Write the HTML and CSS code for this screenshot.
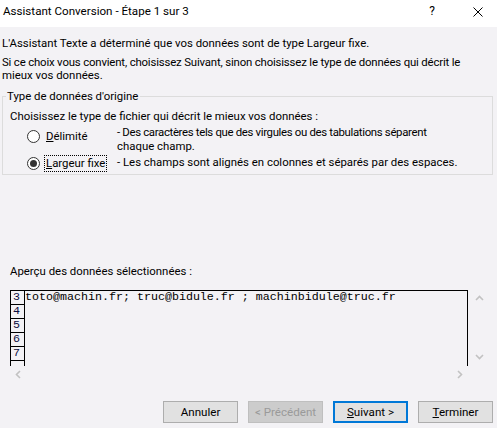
FILE: index.html
```html
<!DOCTYPE html>
<html lang="fr">
<head>
<meta charset="utf-8">
<title>Assistant Conversion</title>
<link rel="stylesheet" href="styles.css">
</head>
<body>
<div class="titlebar">
  <span class="title">Assistant Conversion - Étape 1 sur 3</span>
  <span class="help">?</span>
  <span class="close"><svg width="10" height="10" viewBox="0 0 10 10"><path d="M0.5 0.5 L9.5 9.5 M9.5 0.5 L0.5 9.5" stroke="#000" stroke-width="1" fill="none"/></svg></span>
</div>
<div class="dialog">
  <p class="p1">L'Assistant Texte a déterminé que vos données sont de type Largeur fixe.</p>
  <p class="p2">Si ce choix vous convient, choisissez Suivant, sinon choisissez le type de données qui décrit le</p>
  <p class="p3">mieux vos données.</p>
  <fieldset class="group">
    <legend>Type de données d'origine</legend>
    <div class="choose">Choisissez le type de fichier qui décrit le mieux vos données :</div>
    <div class="opts">
      <div class="opt opt1"><span class="radio"></span><span class="lbl"><u>D</u>élimité</span></div>
      <div class="desc"><span class="tight">- Des caractères tels que des virgules ou des tabulations séparent</span><br>chaque champ.</div>
      <div class="opt opt2"><span class="radio checked"></span><span class="lbl focus"><u>L</u>argeur fixe</span></div>
      <div class="desc">- Les champs sont alignés en colonnes et séparés par des espaces.</div>
    </div>
  </fieldset>
  <div class="preview-label">Aperçu des données sélectionnées :</div>
  <div class="preview-wrap">
    <div class="preview">
      <div class="nums">
        <div class="num">3</div>
        <div class="num">4</div>
        <div class="num">5</div>
        <div class="num">6</div>
        <div class="num">7</div>
        <div class="num"></div>
      </div>
      <div class="data">
        <div class="line">toto@machin.fr; truc@bidule.fr ; machinbidule@truc.fr</div>
      </div>
    </div>
    <div class="vscroll">
      <svg class="chev" width="9" height="6" viewBox="0 0 9 6"><path d="M1 5 L4.5 1.5 L8 5" stroke="#c2c2c2" stroke-width="1.6" fill="none"/></svg>
      <svg class="chev" width="9" height="6" viewBox="0 0 9 6"><path d="M1 1 L4.5 4.5 L8 1" stroke="#c2c2c2" stroke-width="1.6" fill="none"/></svg>
    </div>
  </div>
  <div class="hscroll">
    <svg class="chev" width="6" height="9" viewBox="0 0 6 9"><path d="M5 1 L1.5 4.5 L5 8" stroke="#c2c2c2" stroke-width="1.6" fill="none"/></svg>
    <svg class="chev" width="6" height="9" viewBox="0 0 6 9"><path d="M1 1 L4.5 4.5 L1 8" stroke="#c2c2c2" stroke-width="1.6" fill="none"/></svg>
  </div>
  <div class="buttons">
    <button class="btn">Annuler</button>
    <button class="btn disabled">&lt; Précédent</button>
    <button class="btn default"><u>S</u>uivant &gt;</button>
    <button class="btn"><u>T</u>erminer</button>
  </div>
</div>
</body>
</html>
```
FILE: styles.css
```css
* { box-sizing: border-box; }
html, body { margin: 0; padding: 0; }
body {
  width: 497px;
  height: 428px;
  overflow: hidden;
  background: #f3f2f5;
  font-family: Roboto, "Noto Sans", sans-serif;
  font-size: 11.4px;
  color: #000;
}
.titlebar {
  height: 27px;
  background: #fff;
  display: flex;
  align-items: flex-start;
  padding-top: 4px;
}
.title {
  padding-left: 3px;
  flex: 1;
  font-size: 11.6px;
  line-height: 15px;
}
.help {
  width: 54px;
  text-align: center;
  font-size: 12px;
  line-height: 15px;
}
.close {
  width: 38px;
  height: 15px;
  display: flex;
  justify-content: center;
  align-items: center;
}
.dialog p { margin: 0; padding-left: 2px; line-height: 13px; white-space: nowrap; }
.dialog .p1 { margin-top: 10px; }
.dialog .p2 { margin-top: 6px; letter-spacing: -0.17px; }
.group {
  margin: 8px 4px 0 2px;
  padding: 0 0 4px 0;
  border: 1px solid #dcdcdc;
  min-width: 0;
}
.group legend {
  margin-left: 3px;
  padding: 0 2px 0 1px;
  line-height: 13px;
}
.choose {
  margin-top: 7px;
  padding-left: 7px;
  line-height: 13px;
}
.opts {
  margin-top: 2px;
  padding-left: 24px;
  display: grid;
  grid-template-columns: 90px auto;
  row-gap: 2px;
}
.desc { line-height: 14px; white-space: nowrap; }
.tight { letter-spacing: -0.33px; }
.opt { display: flex; align-items: center; height: 14px; }
.opt1 { margin-top: 4px; }
.opt2 { margin-top: 1px; }
.radio {
  width: 13px;
  height: 13px;
  border: 1px solid #333;
  border-radius: 50%;
  background: #fff;
  margin-right: 4px;
  display: flex;
  align-items: center;
  justify-content: center;
  flex: none;
}
.radio.checked::after {
  content: "";
  width: 7px;
  height: 7px;
  border-radius: 50%;
  background: #333;
}
.lbl {
  line-height: 15px;
  padding: 0 1px;
  border: 1px solid transparent;
  white-space: nowrap;
}
.lbl.focus { border: 1px dotted #000; }
.preview-label {
  margin-top: 90px;
  padding-left: 10px;
  line-height: 13px;
}
.preview-wrap {
  margin-top: 12px;
  margin-left: 10px;
  display: flex;
}
.preview {
  width: 458px;
  height: 76px;
  border: 1px solid #000;
  border-bottom: none;
  overflow: hidden;
  display: flex;
  font-family: "Liberation Mono", "Courier New", monospace;
  font-size: 11.67px;
}
.nums {
  width: 14px;
  border-right: 1px solid #000;
  flex: none;
}
.num {
  height: 14px;
  line-height: 13px;
  border-bottom: 1px solid #000;
  padding-left: 2px;
  color: #0c0c40;
}
.data { padding-left: 0; }
.line { line-height: 13px; white-space: nowrap; }
.vscroll {
  width: 23px;
  height: 76px;
  display: flex;
  flex-direction: column;
  align-items: center;
  justify-content: space-between;
  padding: 5px 0 6px 0;
}
.vscroll .chev { display: block; }
.hscroll {
  height: 35px;
  display: flex;
  justify-content: space-between;
  align-items: flex-start;
  padding: 4px 0 0 15px;
  width: 463px;
}
.hscroll .chev { display: block; }
.buttons {
  display: flex;
  justify-content: flex-end;
  gap: 10px;
  padding-right: 4px;
}
.btn {
  width: 75px;
  height: 22px;
  background: #e1e1e1;
  border: 1px solid #adadad;
  font-family: Roboto, "Noto Sans", sans-serif;
  font-size: 11.6px;
  color: #000;
  padding: 0;
  line-height: 18px;
}
.btn.disabled {
  background: #cccccc;
  border-color: #bfbfbf;
  color: #9a9a9a;
}
.btn.default {
  border: 2px solid #0078d7;
}
```
